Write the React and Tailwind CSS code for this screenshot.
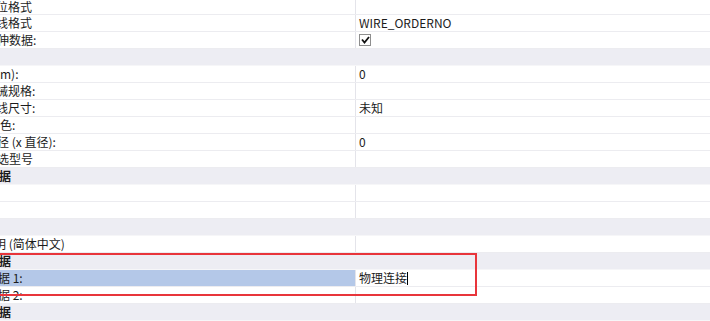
const rows = [
  { label: "位格式", shift: "-ml-1", h: "h-[15px]" },
  { label: "线格式", shift: "-ml-1", value: "WIRE_ORDERNO" },
  { label: "伸数据:", shift: "-ml-[3px]", check: true },
  { section: true, label: "" },
  { label: "m):", shift: "ml-0", value: "0" },
  { label: "械规格:", shift: "-ml-1" },
  { label: "线尺寸:", shift: "-ml-1", value: "未知" },
  { label: "色:", shift: "ml-0" },
  { label: "径 (x 直径):", shift: "-ml-[3px]", value: "0" },
  { label: "选型号", shift: "-ml-[3px]" },
  { section: true, label: "据", shift: "-ml-px" },
  { label: "" },
  { label: "" },
  { section: true, label: "" },
  { label: "明 (简体中文)", shift: "-ml-[6px]" },
  { section: true, label: "据", shift: "-ml-px" },
  { label: "据 1:", shift: "-ml-0.5", value: "物理连接", selected: true },
  { label: "据 2:", shift: "-ml-0.5" },
  { section: true, label: "据", shift: "-ml-px" },
];

function Row({ row }) {
  const h = row.h || "h-[17px]";
  if (row.section) {
    return (
      <div className={`${h} flex items-center bg-[#ededf3] border-b border-[#f6f6f8] overflow-hidden shrink-0`}>
        <span className={`${row.shift || ""} font-bold text-[12px] leading-none whitespace-nowrap`}>
          {row.label}
        </span>
      </div>
    );
  }
  return (
    <div className={`${h} grid grid-cols-[356px_1fr] border-b border-[#ececf0] shrink-0`}>
      <div
        className={`flex items-center overflow-hidden border-r border-[#e4e4ea] ${
          row.selected ? "bg-[#b4c8e8]" : ""
        }`}
      >
        <span className={`${row.shift || ""} whitespace-nowrap text-[12px] leading-none`}>{row.label}</span>
      </div>
      <div className="flex items-center pl-[3px] text-[12px] leading-none whitespace-nowrap">
        {row.check && (
          <span className="w-[12px] h-[12px] border border-[#8e8e8e] bg-white flex items-center justify-center">
            <svg width="9" height="8" viewBox="0 0 9 8">
              <path d="M1 3.5 L3.5 6.5 L8 1" fill="none" stroke="#111" strokeWidth="1.8" />
            </svg>
          </span>
        )}
        {row.value && <span>{row.value}</span>}
        {row.selected && <span className="w-px h-[13px] bg-black" />}
      </div>
    </div>
  );
}

export default function App() {
  return (
    <div
      className="relative w-[710px] h-[321px] overflow-hidden bg-white text-[#1c1c1c] flex flex-col"
      style={{ fontFamily: '"Noto Sans CJK SC", "Noto Sans", sans-serif' }}
    >
      {rows.map((row, i) => (
        <Row key={i} row={row} />
      ))}
      <div className="absolute left-[-4px] top-[253px] w-[481px] h-[43px] border-2 border-[#e8353b]" />
    </div>
  );
}
